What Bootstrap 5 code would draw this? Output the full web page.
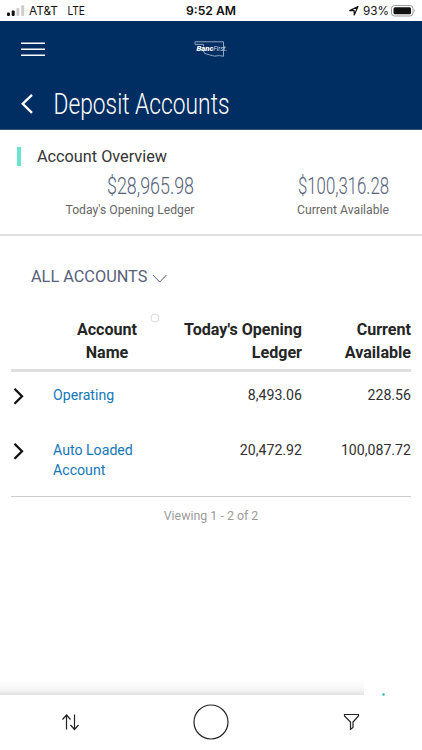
<!DOCTYPE html>
<html lang="en">
<head>
<meta charset="utf-8">
<meta name="viewport" content="width=device-width, initial-scale=1">
<title>Deposit Accounts</title>
<link href="https://cdn.jsdelivr.net/npm/bootstrap@5.3.0/dist/css/bootstrap.min.css" rel="stylesheet">
<style>
body{font-family:Roboto,sans-serif;color:#303030;background:#fff;height:750px;overflow:hidden}
svg{display:block;overflow:visible;flex:none}
svg text{font-family:Roboto,sans-serif}
.status{height:21px;flex:none;color:#111}
.brand-bar{height:109px;flex:none;background:#002d62;border-bottom:1px solid #33567f}
.overview{height:106px;flex:none;border-bottom:2px solid #e0e0e0}
.ov-head{height:36px;padding:17px 0 0 17px}
.accent{width:4px;height:19px;background:#69e4d0}
.filter{color:#56617a;font-size:16.3px;line-height:20px;padding:31px 0 0 31px;height:83px}
.acct{margin:0 11px;width:400px;table-layout:fixed;font-size:14.15px;line-height:20.5px}
.acct th,.acct td{padding:0;vertical-align:top}
.acct th{font-size:16.1px;line-height:22.5px;color:#252525;height:51px}
.acct thead tr{border-bottom:3px solid #dedede}
.acct tbody{border-bottom:1px solid #ccc}
.acct td{padding-top:13px}
.acct tr.tall td{padding-top:14.5px}
.acct a{color:#1477b8}
.count{font-size:12.4px;line-height:18px;color:#9b9b9b;padding-top:10px}
.tools{height:56px;flex:none}
.fade-line{height:15px;width:364px;background:linear-gradient(#fff,#f5f5f5 65%,#e2e2e2)}
</style>
<script src="https://cdn.jsdelivr.net/npm/bootstrap@5.3.0/dist/js/bootstrap.bundle.min.js"></script>
</head>
<body class="d-flex flex-column">
<div class="status">
<svg width="422" height="21" fill="#111">
<rect x="7" y="12.5" width="3" height="3.5" rx="1"/><rect x="11.7" y="10.5" width="3" height="5.5" rx="1"/>
<g fill="#ccc"><rect x="16.4" y="8" width="3" height="8" rx="1"/><rect x="21.2" y="5.2" width="3" height="10.8" rx="1"/></g>
<g font-size="12"><text x="29" y="15.3" textLength="29" lengthAdjust="spacingAndGlyphs" style="font-family:Inter">AT&amp;T</text><text x="67.5" y="15.3" textLength="17.5" lengthAdjust="spacingAndGlyphs" style="font-family:Inter">LTE</text>
<text x="186" y="15.3" textLength="50" lengthAdjust="spacingAndGlyphs" font-weight="600" style="font-family:Inter">9:52 AM</text>
<text x="363" y="15.3" textLength="26" lengthAdjust="spacingAndGlyphs" style="font-family:Inter">93%</text></g>
<path d="M349.7 10.6 358 6.6 354.2 15v-4.4z" fill="none" stroke="#111" stroke-width="1.2" stroke-linejoin="round"/>
<rect x="391.5" y="5.5" width="21.5" height="10.5" rx="3" fill="none" stroke="#999"/><rect x="393.5" y="7.3" width="17.5" height="7" rx="1.5"/><path d="M414.3 9v3.6q1.5-1.8 0-3.6" fill="#999"/>
</svg>
</div>
<header class="brand-bar">
<div class="d-flex align-items-start">
<svg width="195" height="57" stroke="#fff" stroke-width="1.6"><path d="M21 22.2h24M21 28.2h24M21 34.2h24"/></svg>
<svg width="34" height="57" fill="none" stroke="#8fa5c2" stroke-width="1"><path d="M0 20.8h28.5v14.5l-4-.7-5 .5-5-1.2-5-1.5-1.2-3M0 20.8v2.6h8.5v2"/><g fill="#fff" stroke="none" font-style="italic"><text x="1.5" y="30.3" font-size="8" font-weight="900" textLength="17" lengthAdjust="spacingAndGlyphs">Banc</text><text x="18.5" y="30.3" font-size="7.5" textLength="13.5" lengthAdjust="spacingAndGlyphs" fill="#d5dfec">First.</text></g></svg>
</div>
<svg width="240" height="50" fill="#fff"><path d="M32 16.8 22.7 25.8 32 34.8" fill="none" stroke="#fff" stroke-width="2.3"/><text x="53.5" y="36" font-size="30" font-weight="300" textLength="176" lengthAdjust="spacingAndGlyphs">Deposit Accounts</text></svg>
</header>
<section class="overview">
<div class="ov-head d-flex"><div class="accent"></div><svg class="ms-3" width="130" height="19" fill="#353535"><text x="0" y="15.2" font-size="16" textLength="130" lengthAdjust="spacingAndGlyphs">Account Overview</text></svg></div>
<div class="d-flex">
<svg width="195" height="60" fill="#56617a"><text x="107" y="27.5" font-size="23.5" font-weight="300" textLength="87" lengthAdjust="spacingAndGlyphs">$28,965.98</text><text x="65.5" y="48" font-size="12" fill="#666" textLength="129" lengthAdjust="spacingAndGlyphs">Today's Opening Ledger</text></svg>
<svg width="227" height="60" fill="#56617a"><text x="103" y="27.5" font-size="23.5" font-weight="300" textLength="91" lengthAdjust="spacingAndGlyphs">$100,316.28</text><text x="102" y="48" font-size="12" fill="#666" textLength="92" lengthAdjust="spacingAndGlyphs">Current Available</text></svg>
</div>
</section>
<main class="flex-grow-1">
<div class="filter d-flex align-items-start position-relative"><span>ALL ACCOUNTS</span><svg class="ms-1" width="16" height="20" fill="none" stroke="#56617a"><path d="M2 8 8.7 15 15.5 8"/></svg>
<svg class="position-absolute" style="left:150px;top:77px" width="10" height="10"><circle cx="5" cy="5" r="4" fill="none" stroke="#ddd"/></svg></div>
<table class="acct">
<colgroup><col style="width:42px"><col style="width:108px"><col style="width:141px"><col></colgroup>
<thead><tr><th></th><th class="text-center">Account<br>Name</th><th class="text-end">Today's Opening<br>Ledger</th><th class="text-end">Current<br>Available</th></tr></thead>
<tbody>
<tr style="height:55px"><td><svg width="16" height="22" fill="none" stroke="#111" stroke-width="2.3"><path d="M3.5 3.8 11 11.3 3.5 18.8"/></svg></td><td><a class="text-decoration-none" href="#">Operating</a></td><td class="text-end">8,493.06</td><td class="text-end">228.56</td></tr>
<tr class="tall" style="height:71px"><td><svg width="16" height="22" fill="none" stroke="#111" stroke-width="2.3"><path d="M3.5 3.8 11 11.3 3.5 18.8"/></svg></td><td><a class="text-decoration-none" href="#">Auto Loaded<br>Account</a></td><td class="text-end">20,472.92</td><td class="text-end">100,087.72</td></tr>
</tbody>
</table>
<div class="count text-center">Viewing 1 - 2 of 2</div>
</main>
<div class="d-flex"><div class="fade-line"></div><svg width="58" height="15"><circle cx="19.5" cy="14.5" r="1.2" fill="#2cb5ac"/></svg></div>
<footer class="tools" style="height:55px">
<svg width="422" height="55" fill="none" stroke="#222" stroke-width="1.2"><path d="M66.5 34.5V20.5M62.5 24.5l4-4.5 4 4.5M74.5 19.5v14M70.5 30l4 4.5 4-4.5"/><circle cx="211" cy="27" r="17"/><path d="M344.5 19.5h14v1.5l-5.5 6V32.5l-2.5 1.8v-7.3l-6-6z"/></svg>
</footer>
</body>
</html>
